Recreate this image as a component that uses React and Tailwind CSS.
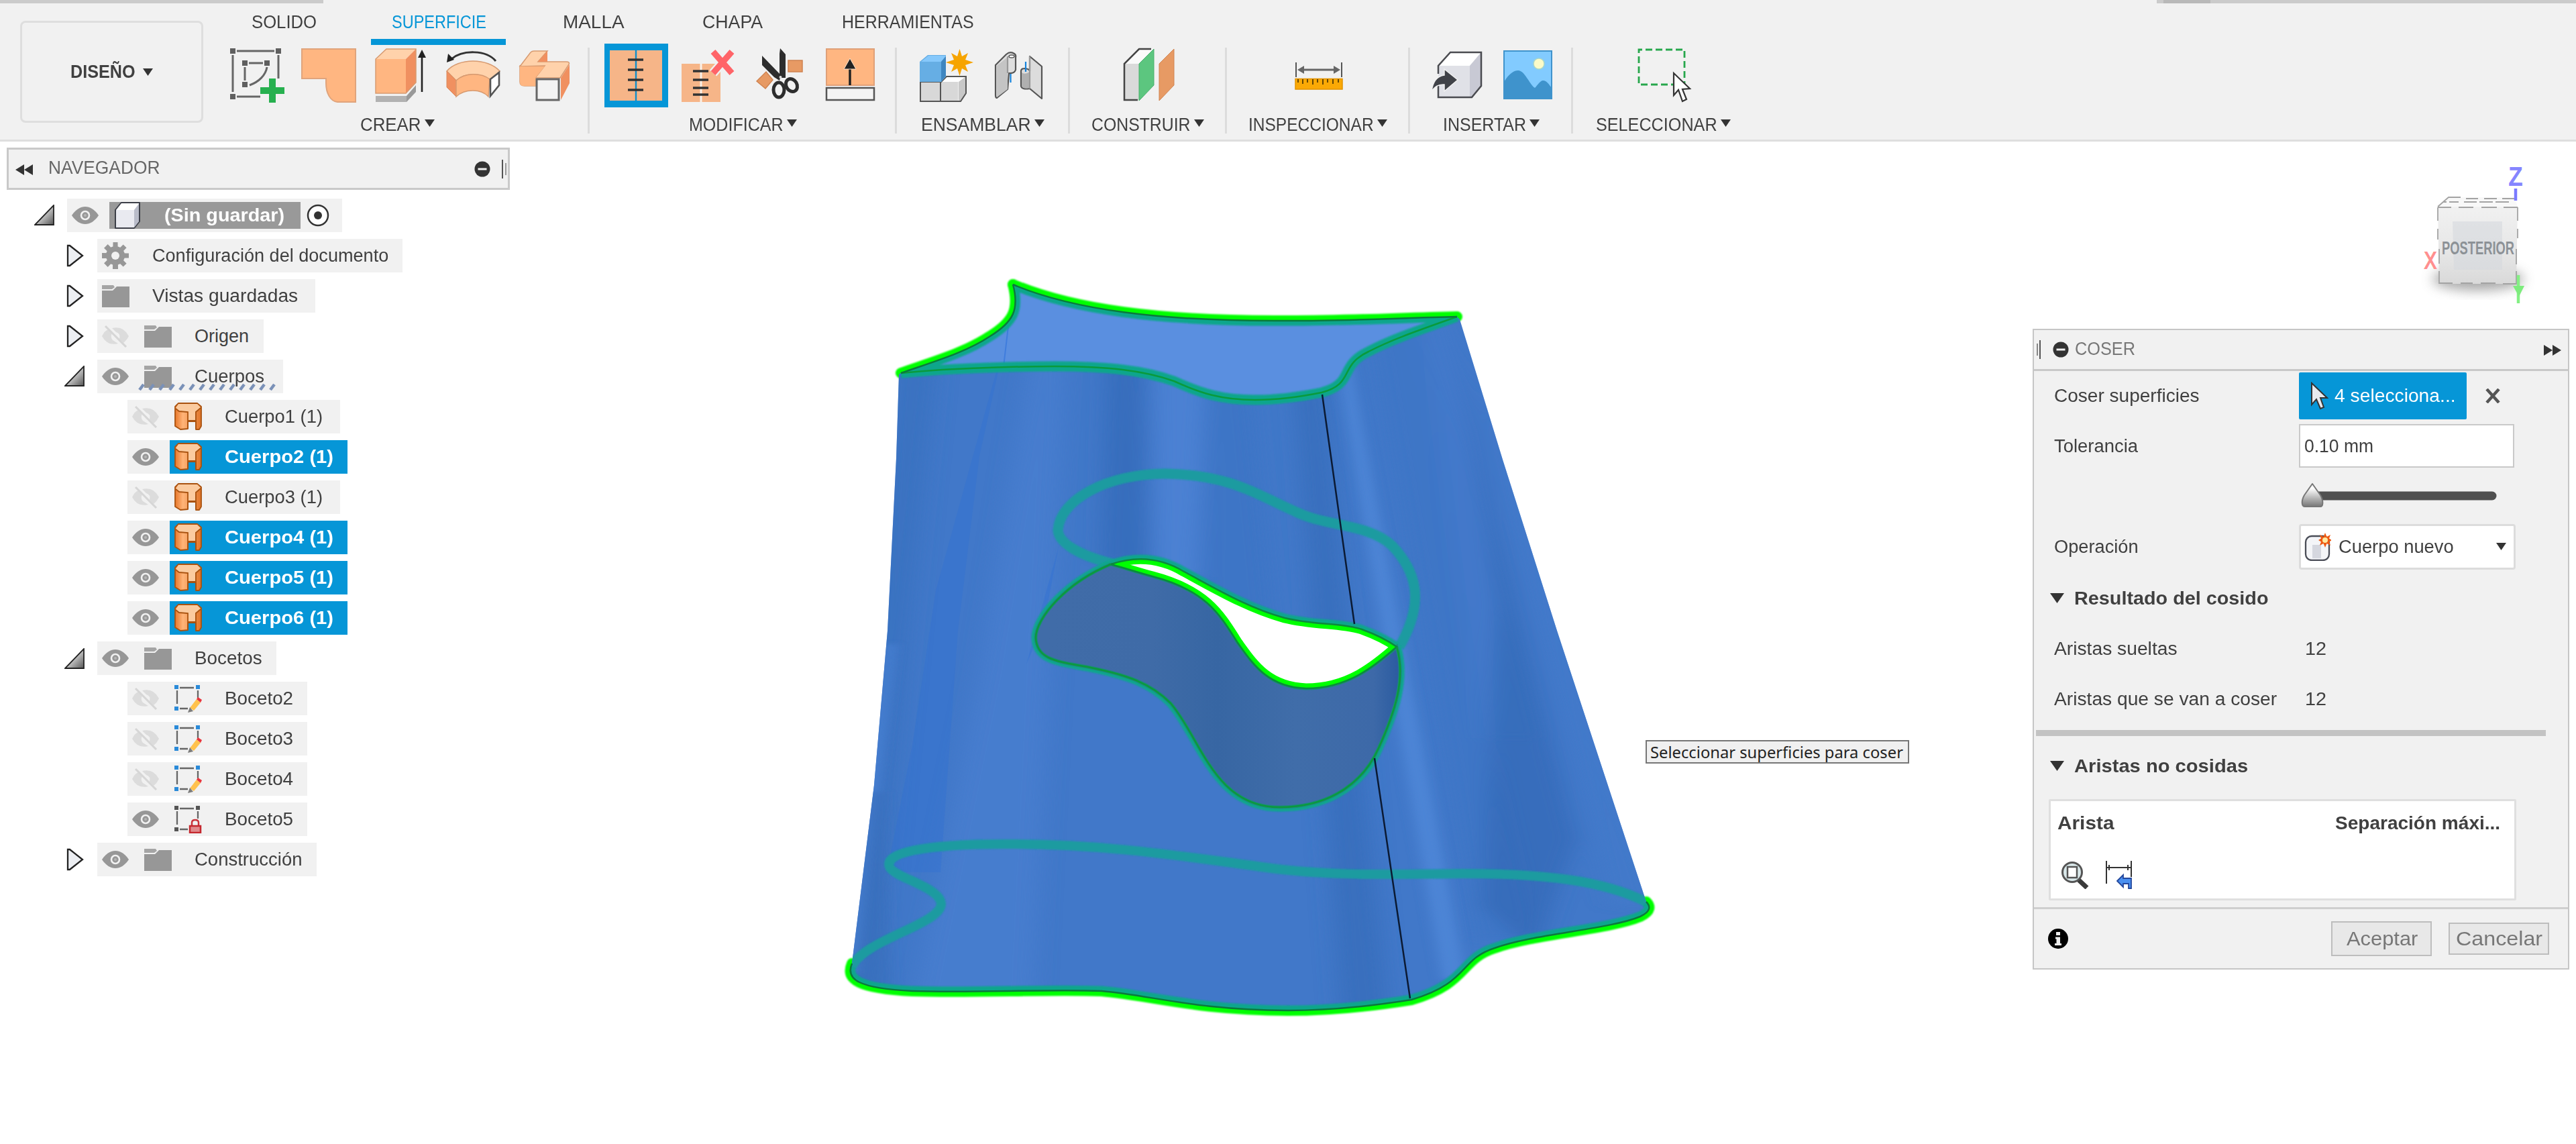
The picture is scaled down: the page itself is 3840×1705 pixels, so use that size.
import React, { useLayoutEffect, useRef } from "react";

/* Text set to a known ink width: the horizontal scale is worked out from the measured width. */
function T({ w, children, className = "" }) {
  const ref = useRef(null);
  useLayoutEffect(() => {
    const el = ref.current;
    el.style.transform = "scaleX(" + (w + 3) / el.offsetWidth + ")";
  }, [w]);
  return (
    <span className={"block shrink-0 overflow-visible whitespace-nowrap " + className} style={{ width: w }}>
      <span ref={ref} className="-ml-[1px] inline-block origin-left">{children}</span>
    </span>
  );
}

const Down = ({ className = "" }) => (
  <svg viewBox="0 0 15 11" className={"shrink-0 " + className}><path d="M0 0H15L7.5 11Z" fill="#333" /></svg>
);

const Ico = ({ children }) => (
  <svg viewBox="0 0 80 80" className="h-20 w-20 shrink-0 overflow-visible">{children}</svg>
);

const SketchCreate = () => (
  <Ico>
    <g stroke="#666" strokeWidth="3" fill="none">
      <path d="M9 4H65M3 10V65M71 10V45M9 72H44M27 22H48M21 28V48M54 28C52 40 42 50 28 55" />
    </g>
    <path d="M-1 0h8v8h-8zM67 0h8v8h-8zM-1 68h8v8h-8zM17 18h8v8h-8zM50 18h8v8h-8zM17 50h8v8h-8z" fill="#5f5f5f" />
    <path d="M57 45h10v13h13v10H67v13H57V68H44V58h13z" fill="#27b04f" />
  </Ico>
);
const Patch = () => (
  <Ico><path d="M-1 1H79V80H52C41 79 35 66 35 52V45H-1Z" fill="#ffb681" stroke="#e0a47c" strokeWidth="2" /></Ico>
);
const Extrude = () => (
  <Ico>
    <path d="M2 16L18 1H62L47 16Z" fill="#ffd2ab" />
    <path d="M47 16L62 1V51L47 67Z" fill="#f09060" />
    <path d="M2 16H47V67H2Z" fill="#ffb681" />
    <path d="M2 16L18 1H62V51L47 67H2Z" fill="none" stroke="#d79a70" strokeWidth="1.5" />
    <path d="M2 71H48V80H2Z" fill="#b2b2b2" />
    <path d="M48 71L62 55V65L48 80Z" fill="#999" />
    <path d="M71 65V12" stroke="#222" strokeWidth="2.6" />
    <path d="M71 2L77 14H65Z" fill="#222" />
  </Ico>
);
const Revolve = () => (
  <Ico>
    <path d="M74 19C60 2 24 2 8 16" fill="none" stroke="#333" strokeWidth="3" />
    <path d="M1 21L3 8L12 17Z" fill="#222" />
    <path d="M1 34C18 14 62 14 80 34L65 48C52 36 28 36 15 48Z" fill="#ffd2ab" stroke="#d79a70" strokeWidth="1.5" />
    <path d="M1 34L15 48V72L1 58Z" fill="#f09060" stroke="#d9885c" strokeWidth="1" />
    <path d="M15 48C28 36 52 36 65 46L63 72C52 60 28 60 15 72Z" fill="#ffb681" stroke="#d79a70" strokeWidth="1.5" />
    <path d="M66 46L79 36V55L66 71Z" fill="#fff" stroke="#555" strokeWidth="2.6" />
  </Ico>
);
const Sweep = () => (
  <Ico>
    <path d="M3 26V50C3 55 6 56 10 56H28V44L44 26Z" fill="#ffb681" stroke="#d79a70" strokeWidth="1.5" />
    <path d="M3 27L19 6Q21 4 24 4H44L30 20H72Q78 20 76 24L63 44H26L40 26Z" fill="#ffd2ab" stroke="#d79a70" strokeWidth="1.5" />
    <path d="M3 27H40L26 44H28V56H8Q3 56 3 50Z" fill="#ffb681" />
    <path d="M44 4V20H30Z" fill="#f09060" />
    <path d="M77 24V52L64 77V44Z" fill="#f09060" />
    <path d="M28 46H61V77H28Z" fill="#f3f3f3" stroke="#666" strokeWidth="3" />
  </Ico>
);
const Stitch = () => (
  <svg viewBox="0 0 95 95" className="-mx-[7.5px] h-[95px] w-[95px] shrink-0">
    <path d="M0 0H95V95H0Z" fill="#0696d7" />
    <path d="M8 10H86V85H8Z" fill="#f6b588" />
    <path d="M47 10V85" stroke="#0f8ecb" strokeWidth="2.4" />
    <path d="M35 24H58M35 39H58M35 54H58M35 69H58" stroke="#333" strokeWidth="3.4" />
  </svg>
);
const Unstitch = () => (
  <Ico>
    <path d="M1 23H59V80H1Z" fill="#f6b588" />
    <path d="M30 23V80" stroke="#f9f0e8" strokeWidth="3" />
    <path d="M18 34H41M18 47H41M18 59H41M18 69H41" stroke="#333" strokeWidth="3.4" />
    <path d="M48 5L76 37M76 5L48 37" stroke="#f1f1f1" strokeWidth="14" />
    <path d="M48 5L76 37M76 5L48 37" stroke="#ff6468" strokeWidth="9" />
  </Ico>
);
const Scissors = () => (
  <Ico>
    <path d="M53 18H74V35H53Z" fill="#e79a64" stroke="#cf8350" strokeWidth="1.5" />
    <path d="M6 49L20 35L30 47L19 60Z" fill="#e79a64" stroke="#cf8350" strokeWidth="1.5" />
    <path d="M41 0L49 9V44H40V8ZM14 11L42 40L40 48L32 43L14 25Z" fill="#2d2d2d" />
    <ellipse cx="39" cy="62" rx="8" ry="11" fill="none" stroke="#2d2d2d" strokeWidth="5" />
    <ellipse cx="58" cy="55" rx="8" ry="10" fill="none" stroke="#2d2d2d" strokeWidth="5" transform="rotate(-30 58 55)" />
    <circle cx="41.500" cy="43" r="2" fill="#ddd" />
  </Ico>
);
const Extend = () => (
  <Ico>
    <path d="M3 1H74V55H3Z" fill="#ffb681" stroke="#dfa078" strokeWidth="2" />
    <path d="M3 59H74V77H3Z" fill="#f4f4f4" stroke="#555" strokeWidth="2.5" />
    <path d="M38 55V28" stroke="#222" strokeWidth="3.5" />
    <path d="M38 15L47 31H29Z" fill="#222" stroke="#ffe3cc" strokeWidth="1" />
  </Ico>
);
const NewComponent = () => (
  <Ico>
    <path d="M0 50H31V80H0Z M31 50H57V80H31Z" fill="#d8d8d8" />
    <path d="M31 50L40 42H69L58 50Z" fill="#fff" />
    <path d="M58 50L69 42V67L60 80H58Z" fill="#c8c8c8" />
    <path d="M1 50V79H61L69 67V42H40L31 51V79M1 50H31" fill="none" stroke="#555" strokeWidth="2" />
    <path d="M0 20L12 10H39V42L32 50H0Z" fill="#66aee4" />
    <path d="M2 20L13 11H39L32 20Z" fill="#86c8fb" />
    <path d="M32 20L39 12V41L32 50Z" fill="#3f86c0" />
    <path d="M59.500 1L63 12L72 7L68 17L80 21L68 25L72 35L63 30L59.500 41L56 30L47 35L51 25L39 21L51 17L47 7L56 12Z" fill="#f6a400" />
  </Ico>
);
const Joint = () => (
  <Ico>
    <g stroke="#555" strokeWidth="2.200" strokeLinejoin="round">
      <path d="M6 25L22 9Q28 4 34 8Q37 10 36 14V32Q34 38 26 37L24 61L8 74Q6 74 6 70Z" fill="#dedede" />
      <path d="M8 26L24 13V61L8 73Z" fill="#c4c4c4" stroke="none" />
      <path d="M24 12V37" fill="none" stroke="#999" />
      <path d="M57 12L75 27V75L57 60Q45 62 44 56V34Q44 30 50 30Q57 31 57 34Z" fill="#dcdcdc" />
      <path d="M45 36Q50 40 57 35V59Q46 61 45 56Z" fill="#b0b0b0" stroke="none" />
      <path d="M57 12V60" fill="none" stroke="#999" />
    </g>
    <ellipse cx="30" cy="12" rx="4" ry="2" fill="#fff" stroke="#555" strokeWidth="1.5" />
    <path d="M28.500 38V51M51 20V35" stroke="#1583dc" strokeWidth="2.200" />
  </Ico>
);
const Plane = () => (
  <Ico>
    <path d="M5 23L27 1H49L27 23Z" fill="#fafafa" />
    <path d="M5 23H27V77H5Z" fill="#dadada" />
    <path d="M25 77H5V23L27 1H45" fill="none" stroke="#444" strokeWidth="2.500" />
    <path d="M27 23L49 1V55L27 78Z" fill="#5cc67f" stroke="#48b06c" strokeWidth="1" />
    <path d="M57 23L79 1V55L57 78Z" fill="#e79a64" stroke="#d08452" strokeWidth="1" />
  </Ico>
);
const Measure = () => (
  <Ico>
    <path d="M6 21V43M74 21V43" stroke="#555" strokeWidth="2" />
    <path d="M14 32H66" stroke="#666" strokeWidth="3" />
    <path d="M8 32L18 26V38ZM72 32L62 26V38Z" fill="#666" />
    <path d="M5 45.500H75V61H5Z" fill="#fba905" stroke="#e29400" strokeWidth="1.500" />
    <path d="M9 46V51M16 46V53M23 46V51M31 46V54M38 46V51M46 46V54M53 46V51M61 46V53M69 46V51" stroke="#4c3500" strokeWidth="1.700" />
  </Ico>
);
const InsertDerive = () => (
  <Ico>
    <path d="M13 26L31 6H77L60 26Z" fill="#fff" />
    <path d="M60 26L77 6V56L63 73H60Z" fill="#c8c9d4" />
    <path d="M13 26H60V73H13Z" fill="#e0e1e7" />
    <path d="M13 38V26L31 6H77V56L63 73H13V56" fill="none" stroke="#4a4b50" strokeWidth="2.500" />
    <path d="M42 47L22 31V40Q6 42 3 64Q10 53 22 54V64Z" fill="#404248" stroke="#f1f1f1" strokeWidth="1.500" />
  </Ico>
);
const Picture = () => (
  <Ico>
    <path d="M4 4H75V75H4Z" fill="#82cbff" />
    <circle cx="56" cy="23" r="8" fill="#fbfbc8" stroke="#a9d6c8" strokeWidth="1.500" />
    <path d="M4 50C12 37 19 33 25 33C35 33 42 54 50 59C54 55 58 48 62 48C68 48 71 54 75 59V75H4Z" fill="#3f93cc" />
    <path d="M4 4H75V75H4Z" fill="none" stroke="#3f93cc" strokeWidth="2" />
  </Ico>
);
const Select = () => (
  <Ico>
    <path d="M2 2H70V54H2Z" fill="none" stroke="#27a74c" strokeWidth="2.800" strokeDasharray="10 5" strokeDashoffset="5" />
    <path d="M54 37V70L61 62L67 79L73 76L67 61L78 60Z" fill="#fff" stroke="#333" strokeWidth="2.200" />
  </Ico>
);

function Group({ width, label, lw, icons, gap = "gap-[27px]", pl = "pl-[4px]", sep = true }) {
  return (
    <div className={"flex h-[128px] shrink-0 flex-col items-center " + width + (sep ? " border-r-3 border-[#dcdcdc]" : "")}>
      <div className={"mt-[1px] flex h-20 items-center justify-center " + gap + " " + pl}>{icons}</div>
      <div className="mt-[18px] flex h-8 items-center gap-[7px] pl-[2px]">
        <T w={lw}>{label}</T>
        <Down className="mb-[6px] h-[11px] w-[15px]" />
      </div>
    </div>
  );
}

function Tab({ label, w, box, active }) {
  return (
    <div className={"flex h-[67px] shrink-0 items-center justify-center pt-[8px] " + box + (active ? " border-b-9 border-[#0696d7] text-[#0696d7]" : " border-b-9 border-transparent")}>
      <T w={w}>{label}</T>
    </div>
  );
}

function Header() {
  return (
    <header className="h-[211px] border-b-3 border-[#dedede] bg-[#f1f1f1]">
      <div className="flex h-[5px] justify-between">
        <div className="w-[482px] bg-[#cbcbcb]" />
        <div className="w-[625px] bg-[#cbcbcb] pl-[10px]"><div className="h-full w-[70px] bg-[#b9b9b9]" /></div>
      </div>
      <div className="flex">
        <div className="ml-[30px] mt-[26px] flex h-[152px] w-[273px] shrink-0 items-center justify-center gap-[13px] rounded-lg border-3 border-[#dedede] font-bold">
          <T w={94}>DISEÑO</T>
          <Down className="h-[11px] w-[15px]" />
        </div>
        <div className="ml-1 flex flex-col">
          <nav className="flex h-[62px] items-end pl-[38px]">
            <Tab label="SOLIDO" w={94} box="w-[156px]" />
            <Tab label="SUPERFICIE" w={138} box="ml-[52px] w-[201px]" active />
            <Tab label="MALLA" w={89} box="ml-[55px] w-[151px]" />
            <Tab label="CHAPA" w={87} box="ml-[57px] w-[149px]" />
            <Tab label="HERRAMIENTAS" w={194} box="ml-[59px] w-[256px]" />
          </nav>
          <div className="mt-[4px] flex">
            <Group width="w-[572px]" label="CREAR" lw={88} pl="pl-[12px]" icons={<><SketchCreate /><Patch /><Extrude /><Revolve /><Sweep /></>} />
            <Group width="w-[458px]" label="MODIFICAR" lw={138} icons={<><Stitch /><Unstitch /><Scissors /><Extend /></>} />
            <Group width="w-[258px]" label="ENSAMBLAR" lw={161} pl="pl-0" icons={<><NewComponent /><Joint /></>} />
            <Group width="w-[234px]" label="CONSTRUIR" lw={145} pl="pl-0" icons={<Plane />} />
            <Group width="w-[273px]" label="INSPECCIONAR" lw={184} pl="pl-[3px]" icons={<Measure />} />
            <Group width="w-[243px]" label="INSERTAR" lw={121} icons={<><InsertDerive /><Picture /></>} />
            <Group width="w-[268px]" label="SELECCIONAR" lw={178} icons={<Select />} sep={false} />
          </div>
        </div>
      </div>
    </header>
  );
}

/* ---- browser tree ---- */
const Eye = () => (
  <svg viewBox="0 0 40 26" className="h-[26px] w-10 shrink-0">
    <path d="M0 13C6 4 13 0 20 0S34 4 40 13C34 22 27 26 20 26S6 22 0 13Z" fill="#979797" />
    <circle cx="20" cy="13" r="6" fill="#979797" stroke="#f1f1f1" strokeWidth="2.6" />
    <circle cx="20" cy="13" r="2" fill="#b5b5b5" />
  </svg>
);
const EyeOff = () => (
  <svg viewBox="0 0 40 34" className="h-[34px] w-10 shrink-0">
    <path d="M0 17Q4 9 9 7L15 13Q12 18 16 23L24 28Q8 32 0 17ZM15 5Q32 1 40 17Q37 23 32 27L26 21Q28 13 21 11Z" fill="#dcdcdc" />
    <path d="M5 2L36 33" stroke="#d6d6d6" strokeWidth="3" />
  </svg>
);
const Folder = () => (
  <svg viewBox="0 0 41 34" className="h-[34px] w-[41px] shrink-0">
    <path d="M0 1H17L19 4L15 7H0Z" fill="#a5a5a5" />
    <path d="M0 9H16L22 3H41V34H0Z" fill="#979797" />
  </svg>
);
const Gear = () => (
  <svg viewBox="0 0 40 40" className="h-10 w-10 shrink-0">
    <g fill="#979797">
      <circle cx="20" cy="20" r="14" />
      {[0, 45, 90, 135].map((a) => <path key={a} d="M16.500 0H23.500L24 40H16Z" transform={"rotate(" + a + " 20 20)"} />)}
    </g>
    <circle cx="20" cy="20" r="6" fill="#f1f1f1" />
  </svg>
);
const DocBox = () => (
  <svg viewBox="0 0 40 40" className="h-10 w-10 shrink-0">
    <path d="M2 12L11 1H38V29L30 39H2Z" fill="#e9eaf0" stroke="#3c3f48" strokeWidth="2" strokeLinejoin="round" />
    <path d="M3 12L11 2H37L30 12Z" fill="#fff" />
    <path d="M30 12L37 3V29L30 38Z" fill="#b9bcc9" />
  </svg>
);
const Body = () => (
  <svg viewBox="0 0 41 41" className="h-[41px] w-[41px] shrink-0">
    <defs>
      <linearGradient id="bodyFront" x1="0" x2="1"><stop offset="0" stopColor="#e8772a" /><stop offset=".3" stopColor="#ffb478" /><stop offset="1" stopColor="#e07428" /></linearGradient>
    </defs>
    <path d="M6 1H34L40 6V35L37 40H32V28H20V39L9 40L1 35V6Z" fill="url(#bodyFront)" stroke="#a9520f" strokeWidth="1.800" strokeLinejoin="round" />
    <path d="M6 2H34L39 7L33 13H31V27H20V13H7L2 8Z" fill="#fbcb9f" />
    <path d="M20 39V14L7 13L2 9M32 39V14L39 8" fill="none" stroke="#a9520f" strokeWidth="1.800" />
    <path d="M20 27H31" stroke="#a9520f" strokeWidth="2" />
  </svg>
);
const SketchFrame = ({ c, children }) => (
  <svg viewBox="0 0 41 41" className="h-[41px] w-[41px] shrink-0">
    <path d="M8 4H29M4 8V28M35 8V19M8 35H20" stroke="#666" strokeWidth="2.300" />
    <path d="M0 0h6v6h-6zM32 0h6v6h-6zM0 32h6v6h-6z" fill={c} />
    {children}
  </svg>
);
const SketchEdit = () => (
  <SketchFrame c="#2a8ad8">
    <path d="M23 34L33 21L39 26L29 38Z" fill="#ffc24d" />
    <path d="M33 21L35 18L41 22L39 26Z" fill="#e8353e" />
    <path d="M23 33L28 39L20 41Z" fill="#7c7c7c" />
  </SketchFrame>
);
const SketchLocked = () => (
  <SketchFrame c="#555">
    <path d="M26 30V25Q26 21 31 21T36 25V30" fill="none" stroke="#c9343b" strokeWidth="2.500" />
    <path d="M23 30H39V40H23Z" fill="#e08a8c" stroke="#c5282f" strokeWidth="2.500" />
  </SketchFrame>
);
const Closed = () => (
  <svg viewBox="0 0 30 34" className="h-[34px] w-[30px]"><path d="M5 2H8L27 17L8 32H5Z" fill="#eceef2" stroke="#222" strokeWidth="2.300" /></svg>
);
const Open = () => (
  <svg viewBox="0 0 30 31" className="h-[31px] w-[30px]">
    <defs><linearGradient id="openG" x1="0" x2="1" y1="0" y2="1"><stop offset=".3" stopColor="#eee" /><stop offset="1" stopColor="#555" /></linearGradient></defs>
    <path d="M29 1V30H1Z" fill="url(#openG)" stroke="#222" strokeWidth="1.800" />
  </svg>
);

const L0 = "pl-[51px]", L1 = "pl-[96px]", L2 = "pl-[141px]";
const ROWS = [
  { lv: L0, arrow: "open", eye: 1, icon: DocBox, t: "(Sin guardar)", w: 176, box: "w-[410px]", root: true },
  { lv: L1, arrow: "closed", icon: Gear, t: "Configuración del documento", w: 349, box: "w-[455px]" },
  { lv: L1, arrow: "closed", icon: Folder, t: "Vistas guardadas", w: 214, box: "w-[325px]" },
  { lv: L1, arrow: "closed", eye: 0, icon: Folder, t: "Origen", w: 78, box: "w-[248px]" },
  { lv: L1, arrow: "open", eye: 1, icon: Folder, t: "Cuerpos", w: 101, box: "w-[277px]", hatch: true },
  { lv: L2, eye: 0, icon: Body, t: "Cuerpo1 (1)", w: 143, box: "w-[317px]" },
  { lv: L2, eye: 1, icon: Body, t: "Cuerpo2 (1)", w: 159, box: "w-[328px]", sel: true },
  { lv: L2, eye: 0, icon: Body, t: "Cuerpo3 (1)", w: 143, box: "w-[317px]" },
  { lv: L2, eye: 1, icon: Body, t: "Cuerpo4 (1)", w: 159, box: "w-[328px]", sel: true },
  { lv: L2, eye: 1, icon: Body, t: "Cuerpo5 (1)", w: 159, box: "w-[328px]", sel: true },
  { lv: L2, eye: 1, icon: Body, t: "Cuerpo6 (1)", w: 159, box: "w-[328px]", sel: true },
  { lv: L1, arrow: "open", eye: 1, icon: Folder, t: "Bocetos", w: 98, box: "w-[267px]" },
  { lv: L2, eye: 0, icon: SketchEdit, t: "Boceto2", w: 99, box: "w-[268px]" },
  { lv: L2, eye: 0, icon: SketchEdit, t: "Boceto3", w: 99, box: "w-[268px]" },
  { lv: L2, eye: 0, icon: SketchEdit, t: "Boceto4", w: 99, box: "w-[268px]" },
  { lv: L2, eye: 1, icon: SketchLocked, t: "Boceto5", w: 99, box: "w-[268px]" },
  { lv: L1, arrow: "closed", eye: 1, icon: Folder, t: "Construcción", w: 158, box: "w-[327px]" },
];

function TreeRow({ r }) {
  const Icon = r.icon;
  return (
    <div className={"flex h-[60.06px] items-center " + r.lv}>
      <div className="flex w-[49px] shrink-0">{r.arrow === "open" ? <Open /> : r.arrow === "closed" ? <Closed /> : null}</div>
      <div className={"relative flex h-[50px] shrink-0 items-center bg-[#f1f1f1] " + r.box}>
        {r.eye !== undefined && <div className="flex w-[63px] shrink-0 pl-[7px]">{r.eye ? <Eye /> : <EyeOff />}</div>}
        <div className={"flex items-center pl-[7px] " + (r.root ? "h-10 w-[285px] bg-[#999] font-bold text-white" : r.sel ? "h-full flex-1 bg-[#0696d7] font-bold text-white" : "h-full flex-1")}>
          <div className="w-[76px] shrink-0"><Icon /></div>
          <T w={r.w}>{r.t}</T>
        </div>
        {r.root && (
          <svg viewBox="0 0 34 34" className="ml-[9px] h-[34px] w-[34px]">
            <circle cx="17" cy="17" r="15" fill="#fff" stroke="#333" strokeWidth="2.500" /><circle cx="17" cy="17" r="6" fill="#333" />
          </svg>
        )}
        {r.hatch && (
          <svg viewBox="0 0 210 12" className="absolute bottom-[3px] left-[60px] h-3 w-[210px]">
            {Array.from({ length: 14 }, (_, i) => <path key={i} d={"M" + (3 + i * 15) + " 10L" + (9 + i * 15) + " 2"} stroke="#7a91b8" strokeWidth="4.500" />)}
          </svg>
        )}
      </div>
    </div>
  );
}

const Minus = ({ className }) => (
  <svg viewBox="0 0 24 24" className={"h-6 w-6 shrink-0 " + className}><circle cx="12" cy="12" r="11.500" fill="#333" /><path d="M5.500 12H18.500" stroke="#f1f1f1" strokeWidth="3" /></svg>
);

function Navigator() {
  return (
    <aside className="absolute left-0 top-[9px] w-[780px]">
      <div className="ml-[10px] flex h-[63px] w-[750px] items-center border-3 border-[#c9c9c9] bg-[#f1f1f1] text-[#666]">
        <svg viewBox="0 0 26 16" className="ml-[10px] mt-[2px] h-4 w-[26px] shrink-0"><path d="M13 0V16L0 8ZM26 0V16L13 8Z" fill="#333" /></svg>
        <T w={164} className="mb-[3px] ml-[24px]">NAVEGADOR</T>
        <Minus className="ml-auto" />
        <div className="ml-[17px] h-7 w-[2px] bg-[#555]" />
        <div className="mr-[2px] ml-[3px] h-[18px] w-[2px] bg-[#999]" />
      </div>
      <div className="pt-[7.500px]">{ROWS.map((r) => <TreeRow key={r.t} r={r} />)}</div>
    </aside>
  );
}

/* ---- stitch dialog ---- */
function Row({ label, w, children }) {
  return (
    <div className="flex h-[75px] items-center pl-[31px]">
      <div className="w-[364px] shrink-0">{label && <T w={w}>{label}</T>}</div>
      {children}
    </div>
  );
}
const Section = ({ label, w }) => (
  <div className="flex h-[75px] items-center pl-6 font-bold">
    <svg viewBox="0 0 21 15" className="h-[15px] w-[21px] shrink-0"><path d="M0 0H21L10.500 15Z" fill="#333" /></svg>
    <T w={w} className="ml-4">{label}</T>
  </div>
);

function Dialog() {
  return (
    <section className="absolute left-[3030px] top-[279px] flex h-[955px] w-[800px] flex-col border-2 border-[#c6c6c6] bg-[#f1f1f1]">
      <div className="flex h-[61px] shrink-0 items-center border-b-3 border-[#c9c9c9] text-[#777]">
        <div className="ml-[4px] h-[18px] w-[2px] bg-[#888]" />
        <div className="ml-[2px] h-7 w-[2px] bg-[#555]" />
        <Minus className="ml-[18px]" />
        <T w={87} className="mb-[2px] ml-[10px]">COSER</T>
        <svg viewBox="0 0 26 16" className="ml-auto mr-[10px] mt-[2px] h-4 w-[26px]"><path d="M0 0V16L13 8ZM13 0V16L26 8Z" fill="#333" /></svg>
      </div>
      <div className="-mt-[1px] mb-[2px] flex flex-col">
        <Row label="Coser superficies" w={214}>
          <div className="flex h-[70px] w-[250px] items-center rounded-xs bg-[#0696d7] pl-[17px] text-white">
            <svg viewBox="0 0 27 42" className="h-[42px] w-[27px] shrink-0"><path d="M2 2V34L9 26L15 40L20 38L15 24H25Z" fill="#e8eaef" stroke="#333" strokeWidth="2" /></svg>
            <T w={178} className="ml-[10px]">4 selecciona...</T>
          </div>
          <svg viewBox="0 0 22 22" className="ml-7 h-[22px] w-[22px]"><path d="M2 1L20 21M20 1L2 21" stroke="#555" strokeWidth="4.500" /></svg>
        </Row>
        <Row label="Tolerancia" w={122}>
          <div className="flex h-[65px] w-[321px] items-center border-2 border-[#c9c9c9] bg-white pl-[7px]"><T w={100}>0.10 mm</T></div>
        </Row>
        <Row>
          <svg viewBox="0 0 300 40" className="mb-[2px] h-10 w-[300px]">
            <defs><linearGradient id="thumb" x1="0" x2="0" y1="0" y2="1"><stop offset=".2" stopColor="#fff" /><stop offset="1" stopColor="#777" /></linearGradient></defs>
            <path d="M20 20H288" stroke="#505050" strokeWidth="13" strokeLinecap="round" />
            <path d="M20 2L32 19C37 28 36 36 32 36H9C4 36 3 28 8 19Z" fill="url(#thumb)" stroke="#777" strokeWidth="2" strokeLinejoin="round" />
          </svg>
        </Row>
        <Row label="Operación" w={123}>
          <div className="flex h-[68px] w-[323px] items-center rounded-sm border-3 border-[#dcdcdc] bg-white pl-[5px]">
            <svg viewBox="0 0 40 42" className="h-[42px] w-10 shrink-0">
              <rect x="2" y="5" width="35" height="36" rx="9" fill="#f4f5f8" stroke="#4a4d57" strokeWidth="2.300" />
              <path d="M12 18H25V38H12Z" fill="#d5d7df" />
              <path d="M31 0L33.500 6L39 3L37 8.500L41 11L37 13.500L39 19L33.500 16L31 22L28.500 16L23 19L25 13.500L21 11L25 8.500L23 3L28.500 6Z" fill="#ee5a12" />
              <circle cx="31" cy="11" r="4" fill="#ffe9a0" />
            </svg>
            <T w={169} className="ml-[12px]">Cuerpo nuevo</T>
            <Down className="ml-auto mr-[11px] h-[11px] w-[15px]" />
          </div>
        </Row>
      </div>
      <Section label="Resultado del cosido" w={287} />
      <Row label="Aristas sueltas" w={181}><T w={29} className="ml-[10px]">12</T></Row>
      <Row label="Aristas que se van a coser" w={329}><T w={29} className="ml-[10px]">12</T></Row>
      <div className="ml-[3px] mt-[9px] h-[9px] w-[760px] shrink-0 bg-[#c3c3c3]" />
      <div className="mt-[7px]"><Section label="Aristas no cosidas" w={256} /></div>
      <div className="ml-[22px] mt-[12px] flex h-[151px] w-[697px] shrink-0 flex-col rounded-xs border-3 border-[#dfdfdf] bg-white">
        <div className="flex h-[66px] items-center justify-between pl-[11px] pr-[23px] font-bold">
          <T w={82}>Arista</T>
          <T w={243}>Separación máxi...</T>
        </div>
        <div className="ml-[15px] mt-[23px] flex gap-6">
          <svg viewBox="0 0 42 42" className="h-[42px] w-[42px]">
            <path d="M25 27L39 40" stroke="#3a3a3a" strokeWidth="7" />
            <circle cx="17" cy="17" r="14.500" fill="#d9e8ea" stroke="#555" strokeWidth="3" />
            <path d="M10 9H24V25H10Z" fill="#fff" stroke="#555" strokeWidth="2.500" />
          </svg>
          <svg viewBox="0 0 42 42" className="h-[42px] w-[42px]">
            <path d="M2 0V34M39 0V24M2 10H39M6 6V14M34 6V14" stroke="#333" strokeWidth="2" />
            <path d="M18 30L27 21V26H39V41H35V34H27V39Z" fill="#4a90f0" stroke="#23479c" strokeWidth="1.800" />
          </svg>
        </div>
      </div>
      <div className="mt-auto flex h-[91px] shrink-0 items-center border-t-3 border-[#cfcfcf] pl-[21px] text-[30px] text-[#777]">
        <svg viewBox="0 0 30 30" className="h-[30px] w-[30px]">
          <circle cx="15" cy="15" r="15" fill="#000" /><path d="M12 5H18V10H12ZM11 12.500H18V22H20V25H10V22H12.500V15.500H11Z" fill="#eee" />
        </svg>
        <div className="ml-auto flex h-[52px] w-[150px] items-center justify-center border-2 border-[#bdbdbd] bg-[#e8e8e8]"><T w={103}>Aceptar</T></div>
        <div className="ml-[25px] mr-[28px] flex h-[48px] w-[150px] items-center justify-center border-2 border-[#bdbdbd] bg-[#e8e8e8]"><T w={126}>Cancelar</T></div>
      </div>
    </section>
  );
}

/* ---- model ---- */
const BACK_RIM = "M1510 424C1600 462 1730 478 1900 478C2000 479 2080 474 2172 472";
const LEFT_RIM = "M1510 424C1520 462 1510 480 1476 501C1440 525 1395 538 1343 556";
const FRONT_RIM = "M1343 556C1400 550 1500 546 1572 546C1650 546 1705 552 1750 568C1790 586 1820 596 1871 596C1910 596 1945 590 1970 585C2020 572 1995 545 2040 524C2075 506 2110 494 2172 472";
const TOP_FACE = FRONT_RIM + "C2080 474 2000 479 1900 478C1730 478 1600 462 1510 424C1520 462 1510 480 1476 501C1440 525 1395 538 1343 556Z";
const BOTTOM = "M1270 1436C1260 1460 1280 1473 1360 1477C1450 1480 1560 1474 1642 1477C1720 1484 1780 1505 1920 1506C1990 1506 2060 1497 2104 1490C2190 1465 2175 1430 2228 1413C2285 1392 2400 1385 2445 1366C2462 1358 2460 1350 2454 1344";
const WALL = FRONT_RIM + "L2176 476L2240 685L2321 940L2454 1344C2460 1350 2462 1358 2445 1366C2400 1385 2285 1392 2228 1413C2175 1430 2190 1465 2104 1490C2060 1497 1990 1506 1920 1506C1780 1505 1720 1484 1642 1477C1560 1474 1450 1480 1360 1477C1280 1473 1260 1460 1270 1436L1303 1170L1323 940L1336 683L1340 558Z";
const BACK_LOOP = "M1658 840C1610 828 1578 810 1577 790C1580 745 1650 706 1737 706C1830 707 1870 735 1930 762C1975 785 2040 780 2075 813C2110 850 2126 895 2086 964";
const BACK_FLOOR = "M2453 1344C2390 1312 2300 1302 2180 1302C2050 1304 1960 1305 1867 1290C1760 1276 1650 1258 1500 1258C1370 1258 1318 1272 1326 1292C1332 1308 1403 1322 1403 1348C1400 1378 1290 1400 1270 1440";
const HOLE_TOP = "M1656 841C1700 826 1735 834 1765 852C1810 876 1860 906 1915 921C1960 932 2000 928 2030 938C2052 946 2068 954 2082 964";
const HOLE_LOW = "C2050 992 2010 1026 1947 1026C1890 1024 1868 990 1845 958C1818 915 1798 880 1718 859C1695 853 1675 846 1656 841";
const HOLE = HOLE_TOP + HOLE_LOW + "Z";
const HOLE_BASE = "M1656 841C1590 868 1545 920 1544 950C1545 985 1580 986 1626 995C1680 1006 1715 1018 1745 1048C1790 1100 1810 1203 1907 1203C1990 1203 2035 1160 2055 1115C2080 1060 2096 1010 2082 964";
const HOLE_INNER = HOLE_BASE + HOLE_LOW + "Z";

function Model() {
  return (
    <svg viewBox="1200 380 1320 1180" className="absolute left-[1200px] top-[169px] h-[1180px] w-[1320px]">
      <defs>
        <clipPath id="wall"><path d={WALL} /></clipPath>
        <clipPath id="solid"><path d={WALL} /><path d={TOP_FACE} /></clipPath>
        <clipPath id="hole"><path d={HOLE} /></clipPath>
        <linearGradient id="inner" gradientUnits="userSpaceOnUse" x1="1560" x2="2090" y1="1000" y2="1000">
          <stop offset="0" stopColor="#406ca8" /><stop offset=".3" stopColor="#3f6ba7" /><stop offset=".48" stopColor="#3766a3" />
          <stop offset=".7" stopColor="#406da9" /><stop offset=".92" stopColor="#3d69a8" /><stop offset="1" stopColor="#295aa0" />
        </linearGradient>
        <filter id="soft" x="-30%" y="-10%" width="160%" height="120%"><feGaussianBlur stdDeviation="16 6" /></filter>
        <filter id="fine" x="-30%" y="-10%" width="160%" height="120%"><feGaussianBlur stdDeviation="9 3" /></filter>
        <filter id="edge" x="-5%" y="-5%" width="110%" height="110%"><feGaussianBlur stdDeviation="1" /></filter>
      </defs>
      <g fill="none" stroke="#00ff00" strokeWidth="16" strokeLinecap="round" strokeLinejoin="round" filter="url(#edge)">
        <path d={BACK_RIM} /><path d={LEFT_RIM} /><path d={BOTTOM} />
      </g>
      <path d={TOP_FACE} fill="#5a8fe0" />
      <path d={WALL} fill="#4178c9" />
      <g clipPath="url(#wall)">
        <g filter="url(#soft)">
          <path d="M1335 500H1400L1350 1000L1300 1500H1262Z" fill="#396fbd" opacity=".7" />
          <path d="M1540 500H1590L1540 1500H1360L1460 1000Z" fill="#487fd0" opacity=".7" />
          <path d="M1650 500H1705L1715 830L1710 860L1640 830Z" fill="#366cba" opacity=".8" />
          <path d="M1720 500H1800L1785 860H1718Z" fill="#4b81d3" />
          <path d="M1800 520H1860L1900 940H1790Z" fill="#3d74c4" opacity=".7" />
          <path d="M1925 520H1970L2070 1520H2000Z" fill="#386fbd" opacity=".9" />
          <path d="M2040 480H2120L2200 1000L2290 1400H2200Z" fill="#3e75c5" opacity=".6" />
          <path d="M2120 470L2150 470L2300 1100L2210 1100Z" fill="#457ccd" opacity=".6" />
          <path d="M2170 500L2230 780L2350 1250L2290 1420L2210 1350L2230 900Z" fill="#3368b6" opacity=".7" />
          <path d="M2180 480L2240 640L2470 1350L2400 1350Z" fill="#437acb" opacity=".7" />
        </g>
        <g filter="url(#fine)">
          <path d="M1994 540H2012L2100 1000L2185 1460H2150L2070 1000Z" fill="#5087d8" opacity=".85" />
          <path d="M1322 960L1334 960L1275 1450H1258Z" fill="#4c83d6" />
          <path d="M1295 1180L1318 1180L1330 1480H1268Z" fill="#386eba" opacity=".6" />
        </g>
        <path d="M1500 500L1460 680L1428 940L1402 1300H1322L1360 1110L1395 880Z" fill="#2f70d4" opacity=".35" />
        <path d="M1578 815L1556 930L1530 990L1560 880Z" fill="#2f70d4" opacity=".4" />
      </g>
      <path d="M1504 478L1496 546" stroke="#3f7ddd" strokeWidth="2" />
      <g clipPath="url(#solid)" fill="none" stroke="#0da68c" strokeWidth="15" strokeLinejoin="round" filter="url(#edge)">
        <path d={BACK_RIM} /><path d={LEFT_RIM} /><path d={FRONT_RIM} /><path d={BOTTOM} />
        <path d={BACK_LOOP} stroke="#1a9ba0" /><path d={BACK_FLOOR} stroke="#1a9ba0" strokeWidth="14" />
      </g>
      <g fill="none" stroke="#0da68c" strokeWidth="13" strokeLinejoin="round" filter="url(#edge)">
        <path d={HOLE_BASE} /><path d={HOLE_TOP} />
      </g>
      <path d={HOLE_INNER} fill="url(#inner)" />
      <path d={HOLE_BASE + HOLE_LOW} fill="none" stroke="#1d8a7c" strokeWidth="5" />
      <path d={HOLE} fill="#fff" />
      <g clipPath="url(#hole)"><path d={HOLE} fill="none" stroke="#00ff00" strokeWidth="15" /></g>
      <g fill="none" stroke="#0a9a3c" strokeWidth="2.500">
        <path d={FRONT_RIM} /><path d={BACK_RIM} stroke="#0b7a3c" /><path d={LEFT_RIM} stroke="#0b7a3c" />
        <path d={BOTTOM} stroke="#0b7a3c" /><path d={HOLE} stroke="#0c8a3c" /><path d={HOLE_BASE} />
      </g>
      <path d="M1971 588L2019 930M2049 1130L2102 1488" stroke="#0b1a33" strokeWidth="2.500" />
    </svg>
  );
}

function ViewCube() {
  return (
    <svg viewBox="0 0 300 260" className="absolute left-[3540px] top-[9px] h-[260px] w-[300px]">
      <defs>
        <filter id="cubeShadow" x="-40%" y="-40%" width="180%" height="180%"><feGaussianBlur stdDeviation="9" /></filter>
        <linearGradient id="cubeFace" x1="0" x2="0" y1="0" y2="1"><stop offset="0" stopColor="#f1f1f1" /><stop offset=".6" stopColor="#e6e6e6" /><stop offset="1" stopColor="#d9d9d9" /></linearGradient>
      </defs>
      <ellipse cx="154" cy="196" rx="68" ry="17" fill="#8c8c8c" opacity=".75" filter="url(#cubeShadow)" />
      <path d="M94 88L110 74H208L213 88Z" fill="#f8f8f8" />
      <path d="M94 88H213L211 203H96Z" fill="url(#cubeFace)" />
      <path d="M116 110H190V182H118Z" fill="#d6d9de" opacity=".6" />
      <g fill="none" stroke="#a3a3a3" strokeWidth="1.800">
        <path d="M94 88L110 74H128M136 76H154M163 76H182M190 76H208M102 81H107M111 81H125M133 81H152M156 81H176M180 81H200" />
        <path d="M94 89H114M125 89H147M159 89H182M192 89H213M94 89V109M94 121V137M96 151V173M96 184V202H116M128 202H146M158 202H180M191 203H211V184M213 89V109M213 121V135M211 151V174" />
      </g>
      <text x="100" y="159" fontSize="27" fontWeight="bold" fontFamily="Liberation Sans, sans-serif" fill="#8c9196" textLength="108" lengthAdjust="spacingAndGlyphs">POSTERIOR</text>
      <text x="200" y="56" fontSize="36" fontFamily="Liberation Sans, sans-serif" fill="#8585ff" stroke="#8585ff" strokeWidth="1.8" textLength="20" lengthAdjust="spacingAndGlyphs">Z</text>
      <path d="M210 61V79" stroke="#7a7aff" strokeWidth="4.500" />
      <text x="74" y="180" fontSize="35" fontFamily="Liberation Sans, sans-serif" fill="#ff8f8f" stroke="#ff8f8f" strokeWidth="1.8" textLength="18" lengthAdjust="spacingAndGlyphs">X</text>
      <path d="M214 190V232" stroke="#84f084" strokeWidth="4.500" /><path d="M206 206H223L215 222Z" fill="#7dec7d" />
    </svg>
  );
}

export default function App() {
  return (
    <div className="flex h-[1705px] w-[3840px] flex-col overflow-hidden bg-white font-['Liberation_Sans',Arial,sans-serif] text-[27px] leading-[32px] text-[#404040]">
      <Header />
      <main className="relative flex-1">
        <Model />
        <Navigator />
        <ViewCube />
        <Dialog />
        <div className="absolute left-[2453px] top-[892px] flex h-[35px] w-[393px] items-center border-2 border-[#767676] bg-[#f0f0f0] pl-[6px] font-['Noto_Sans',sans-serif] text-[24px] text-[#222]">
          <T w={374}>Seleccionar superficies para coser</T>
        </div>
      </main>
    </div>
  );
}
